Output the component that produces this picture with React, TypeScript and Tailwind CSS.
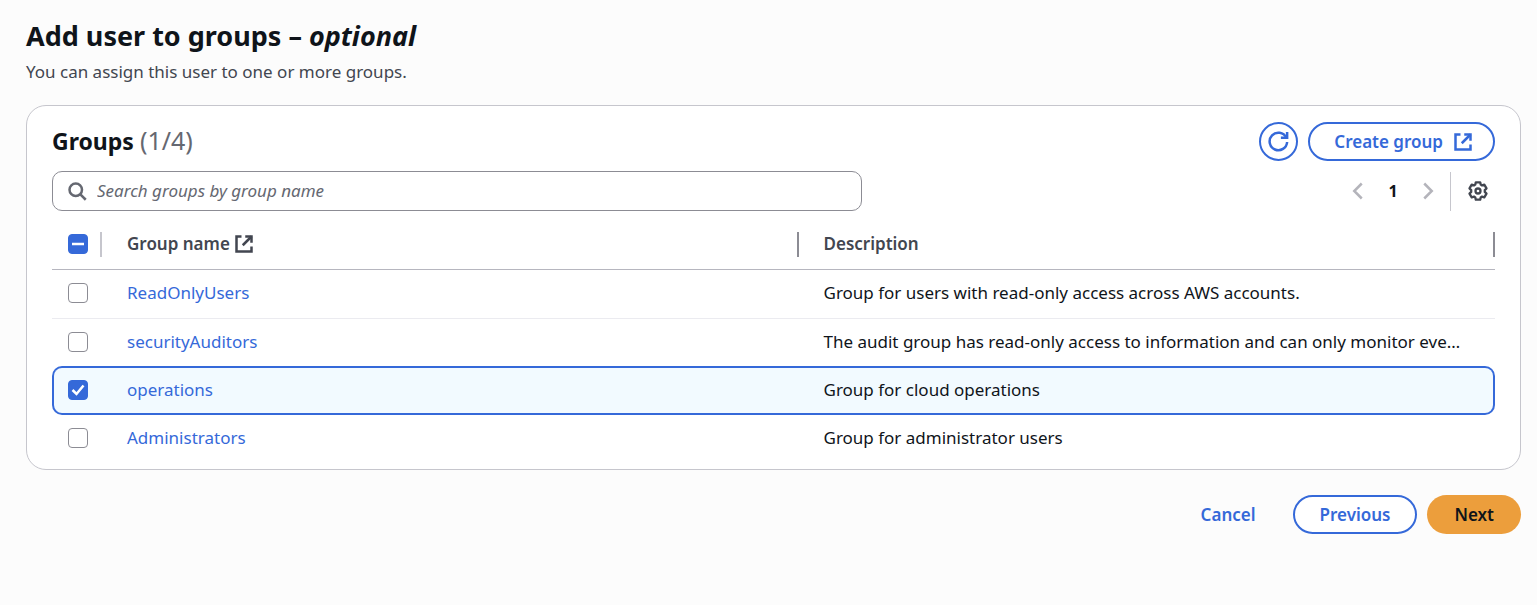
import { useEffect, useRef, useState } from "react";

type Group = { name: string; description: string };

const groups: Group[] = [
  { name: "ReadOnlyUsers", description: "Group for users with read-only access across AWS accounts." },
  {
    name: "securityAuditors",
    description: "The audit group has read-only access to information and can only monitor events.",
  },
  { name: "operations", description: "Group for cloud operations" },
  { name: "Administrators", description: "Group for administrator users" },
];

function ExternalIcon() {
  return (
    <svg className="size-5 shrink-0" viewBox="0 0 16 16" fill="none" stroke="currentColor" strokeWidth="2" aria-hidden="true">
      <path d="M9 2h5v5" />
      <path d="m7 9 7-7" />
      <path d="M14 10v4H2V2h4" />
    </svg>
  );
}

function RefreshIcon() {
  return (
    <svg className="size-5 overflow-visible" viewBox="0 0 16 16" fill="none" stroke="currentColor" strokeWidth="2" aria-hidden="true">
      <path d="M9.500 4.500h5V0" />
      <path d="M14.500 8A7 7 0 1 1 13.800 4.500" />
    </svg>
  );
}

function SearchIcon() {
  return (
    <svg className="size-5 shrink-0 text-[#656871]" viewBox="0 0 16 16" fill="none" stroke="currentColor" strokeWidth="2" aria-hidden="true">
      <circle cx="7" cy="7" r="5" />
      <path d="m10.5 10.5 4.5 4.5" />
    </svg>
  );
}

function GearIcon() {
  return (
    <svg className="size-5" viewBox="0 0 20 20" fill="none" stroke="currentColor" strokeWidth="2.3" strokeLinejoin="round" aria-hidden="true">
      <path d="M7.800 1.300h4.400l.5 2.300 1.300.8 2.300-.7 2.200 3.700-1.700 1.700v1.800l1.700 1.700-2.200 3.700-2.300-.7-1.300.8-.5 2.300H7.800l-.5-2.300-1.300-.8-2.300.7-2.200-3.700 1.700-1.700V9.100L1.500 7.400l2.200-3.700 2.300.7 1.300-.8z" />
      <circle cx="10" cy="10" r="2.500" />
    </svg>
  );
}

function Chevron({ path }: { path: string }) {
  return (
    <svg className="size-5" viewBox="0 0 16 16" fill="none" stroke="currentColor" strokeWidth="2" aria-hidden="true">
      <path d={path} />
    </svg>
  );
}

function Checkbox({
  label,
  checked,
  mixed = false,
  onChange,
}: {
  label: string;
  checked: boolean;
  mixed?: boolean;
  onChange: () => void;
}) {
  const ref = useRef<HTMLInputElement>(null);
  useEffect(() => {
    if (ref.current) ref.current.indeterminate = mixed;
  }, [mixed]);
  return (
    <span className="relative block size-5">
      <input
        ref={ref}
        type="checkbox"
        aria-label={label}
        checked={checked}
        onChange={onChange}
        className="block size-5 appearance-none rounded border border-[#8c8c94] bg-white checked:border-[#3569d9] checked:bg-[#3569d9] indeterminate:border-[#3569d9] indeterminate:bg-[#3569d9]"
      />
      {(checked || mixed) && (
        <svg className="pointer-events-none absolute inset-0 size-5" viewBox="0 0 20 20" fill="none" stroke="white" strokeWidth="2.5" aria-hidden="true">
          <path d={mixed ? "M4 10h12" : "m4.500 10 4 4 7-8.500"} />
        </svg>
      )}
    </span>
  );
}

const outlineButton =
  "flex h-[39px] items-center justify-center rounded-full border-2 border-[#3569d9] bg-white font-semibold text-[#3569d9]";

export default function App() {
  const [selected, setSelected] = useState<string[]>(["operations"]);
  const toggle = (name: string) =>
    setSelected((s) => (s.includes(name) ? s.filter((n) => n !== name) : [...s, name]));
  const all = selected.length === groups.length;

  return (
    <main className="min-h-screen bg-[#fcfcfc] pt-[18px] pr-4 pl-[26px] font-['Noto_Sans',sans-serif] text-[17px] leading-6 text-[#0f141a]">
      <h1 className="text-[27px] leading-9 font-bold">
        Add user to groups – <em>optional</em>
      </h1>
      <p className="mt-1.5 text-[#424650]">You can assign this user to one or more groups.</p>

      <section className="mt-[21px] rounded-[20px] border border-[#c6c6cd] bg-white px-[25px] pt-4 pb-[7px]">
        <div className="flex items-start justify-between">
          <h2 className="text-[23px] leading-9 font-bold">
            Groups <span className="text-[25px] font-normal text-[#656871]">(1/4)</span>
          </h2>
          <div className="flex gap-2.5">
            <button type="button" aria-label="Refresh" className={`${outlineButton} w-[39px]`}>
              <RefreshIcon />
            </button>
            <button type="button" className={`${outlineButton} gap-2.5 pr-5 pl-6`}>
              Create group
              <ExternalIcon />
            </button>
          </div>
        </div>

        <div className="mt-2.5 flex items-center justify-between">
          <label className="flex h-10 w-[810px] items-center gap-2.5 rounded-[10px] border border-[#8c8c94] px-3.5">
            <SearchIcon />
            <input
              type="search"
              aria-label="Search groups by group name"
              placeholder="Search groups by group name"
              className="w-full bg-transparent outline-none placeholder:text-[#656871] placeholder:italic"
            />
          </label>
          <div className="flex items-center">
            <button type="button" aria-label="Previous page" disabled className="text-[#b4b4bb]">
              <Chevron path="m11 2-6 6 6 6" />
            </button>
            <button type="button" aria-current="page" className="w-[50px] text-base font-bold">
              1
            </button>
            <button type="button" aria-label="Next page" disabled className="text-[#b4b4bb]">
              <Chevron path="m5 2 6 6-6 6" />
            </button>
            <span className="ml-3 h-[39px] w-px bg-[#c6c6cd]" />
            <button type="button" aria-label="Preferences" className="mr-[7px] ml-[17px] text-[#424650]">
              <GearIcon />
            </button>
          </div>
        </div>

        <table className="mt-2 w-full table-fixed border-separate border-spacing-0 text-left">
          <colgroup>
            <col className="w-[50px]" />
            <col />
            <col />
          </colgroup>
          <thead className="text-[#424650]">
            <tr className="h-[51px] *:border-b *:border-[#b6b6bf] *:p-0 *:align-middle *:font-semibold">
              <th className="relative">
                <div className="pl-4">
                  <Checkbox
                    label="Select all groups"
                    checked={all}
                    mixed={selected.length > 0 && !all}
                    onChange={() => setSelected(all ? [] : groups.map((g) => g.name))}
                  />
                </div>
                <span className="absolute top-[13px] right-0 h-[25px] w-0.5 bg-[#c6c6cd]" />
              </th>
              <th className="relative">
                <div className="flex items-center gap-1 pl-[25px]">
                  Group name <ExternalIcon />
                </div>
                <span className="absolute top-[13px] right-0 h-[25px] w-0.5 bg-[#8c8c94]" />
              </th>
              <th className="relative">
                <div className="pl-[25px]">Description</div>
                <span className="absolute top-[13px] right-0 h-[25px] w-0.5 bg-[#8c8c94]" />
              </th>
            </tr>
          </thead>
          <tbody>
            {groups.map((g, i) => {
              const on = selected.includes(g.name);
              const next = groups[i + 1];
              const line = !on && next !== undefined && !selected.includes(next.name);
              return (
                <tr
                  key={g.name}
                  className={
                    on
                      ? "h-[49px] *:border-y-2 *:border-[#3569d9] *:bg-[#f2faff] *:p-0 *:pb-0.5 *:first:rounded-l-[10px] *:first:border-l-2 *:last:rounded-r-[10px] *:last:border-r-2"
                      : line
                        ? "h-[49px] *:border-b *:border-[#ebebf0] *:p-0 *:pb-0.5"
                        : "h-[47px] *:p-0 *:pb-0.5"
                  }
                >
                  <td>
                    <div className={on ? "pl-3.5" : "pl-4"}>
                      <Checkbox label={`Select ${g.name}`} checked={on} onChange={() => toggle(g.name)} />
                    </div>
                  </td>
                  <td>
                    <a href="#group" className="ml-[25px] text-[#3569d9]">
                      {g.name}
                    </a>
                  </td>
                  <td>
                    <div className="truncate pr-[25px] pl-[25px]">{g.description}</div>
                  </td>
                </tr>
              );
            })}
          </tbody>
        </table>
      </section>

      <div className="mt-[25px] flex items-center justify-end">
        <button type="button" className="mr-[37px] font-semibold text-[#3569d9]">
          Cancel
        </button>
        <button type="button" className={`${outlineButton} mr-2.5 px-[25px]`}>
          Previous
        </button>
        <button type="button" className="h-[39px] rounded-full bg-[#ec9e3c] px-[27px] font-semibold">
          Next
        </button>
      </div>
    </main>
  );
}
